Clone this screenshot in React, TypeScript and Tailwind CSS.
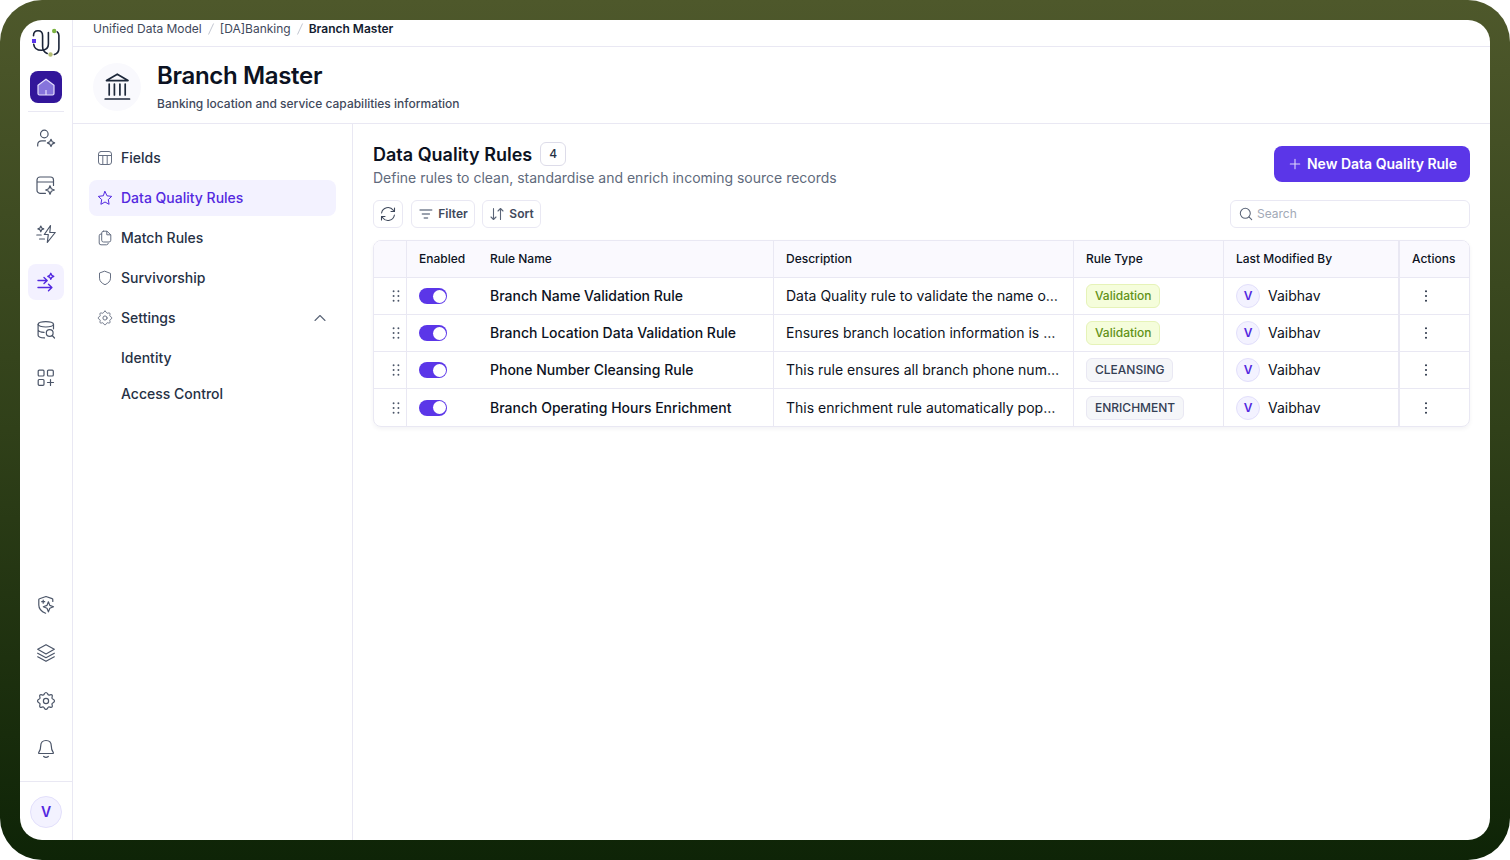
import React from "react";

type P = { children: React.ReactNode; size?: number; className?: string; sw?: number; vb?: number };
function Ico({ children, size = 20, className = "", sw = 1.2, vb = 20 }: P) {
  return (
    <svg width={size} height={size} viewBox={`0 0 ${vb} ${vb}`} fill="none" stroke="currentColor" strokeWidth={sw} strokeLinecap="round" strokeLinejoin="round" className={`shrink-0 ${className}`}>
      {children}
    </svg>
  );
}

const SETTINGS_COG =
  "M10 1.500c1.500 0 1.600 2.100 2.600 2.500s2.400-1.100 3.400 0-.4 2.400 0 3.400 2.500 1.100 2.500 2.600-2.100 1.600-2.500 2.600 1.100 2.400 0 3.400-2.400-.4-3.400 0-1.100 2.500-2.600 2.500-1.600-2.100-2.600-2.500-2.400 1.100-3.400 0 .4-2.400 0-3.400S1.500 11.500 1.500 10s2.100-1.600 2.500-2.600-1.100-2.400 0-3.400 2.400.4 3.400 0S8.500 1.500 10 1.500z";

function Gear({ size, sw }: { size: number; sw: number }) {
  return (
    <Ico size={size} sw={sw}>
      <path d={SETTINGS_COG} />
      <circle cx="10" cy="10" r="2.600" />
    </Ico>
  );
}

function Logo() {
  return (
    <svg width="36" height="36" viewBox="0 0 36 36" fill="none" stroke="#1b2438" strokeWidth="1.600" strokeLinecap="round" className="shrink-0">
      <path d="M5.500 11.800C5.500 8.500 7.200 6.800 10 6.800s4.600 1.900 4.600 5v10.700c0 3.700 1.400 5.700 4.600 7" />
      <path d="M5.700 20.300c.5 3.600 3.500 5.900 7.800 5.900 4.600 0 6.900-2.200 6.900-6.200V8.500" />
      <path d="M29.200 7.800c1.200.8 1.700 1.900 1.700 3.700v12.800c0 3.300-1.600 5.500-4.500 6.200" />
      <rect x="4" y="15" width="4" height="4" fill="#5b36ea" stroke="none" />
      <circle cx="26.200" cy="7" r="2.200" fill="#7cb342" stroke="none" />
      <circle cx="22.500" cy="30.500" r="2.200" fill="#b3bd74" stroke="none" />
    </svg>
  );
}

function Slash() {
  return (
    <svg width="18" height="16" viewBox="0 0 18 16" stroke="#c3c7d1" strokeWidth="1" className="shrink-0">
      <path d="M11.600 2.500 6.500 13.500" />
    </svg>
  );
}

const railTop = [
  <g key="u" transform="translate(0 .5)"><circle cx="8.300" cy="5.500" r="3.800" /><path d="M1.700 17.500v-1.300c0-2.400 1.800-3.900 4.200-3.900h3.600" /><path d="m15 10.800 1.200 2.400 2.400 1.200-2.400 1.200-1.200 2.400-1.200-2.400-2.400-1.200 2.400-1.200z" /></g>,
  <g key="w"><path d="M9.500 17.300H4a3 3 0 0 1-3-3V4a3 3 0 0 1 3-3h10.500a3 3 0 0 1 3 3v5.500M1 6h16.500" /><path d="m14 9.700 1.300 3 3 1.300-3 1.300-1.300 3-1.300-3-3-1.300 3-1.300z" /></g>,
  <g key="z"><path d="M14.500 1.500 8.300 10.500h4l-1 8L19.200 8.500h-5.400zM4.800 2l.9 2 2 .9-2 .9-.9 2-.9-2-2-.9 2-.9zM.8 11h4.400M3.500 15h5" /></g>,
  <g key="r"><path d="M2 8.500h8.500M8 5.500l3.200 3-3.200 3M2 15.500h13.500M12.500 12.200l3.400 3.300-3.400 3.300M14.800 1.300l1 2 2 1-2 1-1 2-1-2-2-1 2-1z" /></g>,
  <g key="d"><ellipse cx="9.800" cy="4.300" rx="7.700" ry="2.700" /><path d="M2.100 4.300v10.900c0 1.500 2.900 2.600 6.400 2.700M17.500 4.300v4.500M2.100 9.800c.3 1.300 2.600 2.300 6 2.500" /><circle cx="13.700" cy="13" r="3.400" /><path d="m16.200 15.500 2.300 2.500" /></g>,
  <g key="g"><rect x="2.200" y="2.200" width="5.800" height="5.800" rx="1" /><rect x="11.500" y="2.200" width="5.800" height="5.800" rx="1" /><rect x="2.200" y="11.500" width="5.800" height="5.800" rx="1" /><path d="M14.500 11.500v6M11.500 14.500h6" /></g>,
];

const railBottom = [
  <g key="s"><path d="M16.800 6.500V4.600a1 1 0 0 0-.7-1L10 1.500 3.500 3.700a1 1 0 0 0-.7.9V10c0 4 3 6.700 6.800 8.200" /><path d="m12.400 6.800 1.400 3.600 3.700 1.400-3.700 1.400-1.400 3.700-1.400-3.700-3.700-1.400 3.700-1.400zM7.200 5.200v3M5.700 6.700h3" /></g>,
  <g key="l"><path d="m10 1.700 8.300 4.600-8.300 4.600-8.300-4.600zM1.700 10.200l8.300 4.500 8.300-4.500M1.700 13.800l8.300 4.500 8.300-4.500" /></g>,
];

const side = [
  { label: "Fields", icon: <g><rect x="1.500" y="1.500" width="13" height="13" rx="2.500" /><path d="M1.500 5.500h13M5.800 5.500v9M10.200 5.500v9" /></g> },
  { label: "Data Quality Rules", active: true, icon: <path d="m8 1.500 2 4.300 4.700.6-3.400 3.200.8 4.700L8 12l-4.100 2.300.8-4.700-3.400-3.200L6 5.800z" /> },
  { label: "Match Rules", icon: <g><path d="M6.500 1.200H10l3.800 3.600v5.400a1.800 1.800 0 0 1-1.800 1.800H6.500a1.800 1.800 0 0 1-1.800-1.800V3a1.800 1.800 0 0 1 1.800-1.800z" /><path d="M9.800 1.400v3.400h3.800M4.700 4H4a1.800 1.800 0 0 0-1.800 1.800v7.200A1.800 1.800 0 0 0 4 14.800h5.500a1.800 1.800 0 0 0 1.800-1.500" /></g> },
  { label: "Survivorship", icon: <path d="m8 1.300 5.500 2.100v4.800c0 3-2.300 5.100-5.500 6.500-3.200-1.400-5.500-3.500-5.500-6.500V3.400z" /> },
];

const rows = [
  ["Branch Name Validation Rule", "Data Quality rule to validate the name of the branch", "Validation"],
  ["Branch Location Data Validation Rule", "Ensures branch location information is complete", "Validation"],
  ["Phone Number Cleansing Rule", "This rule ensures all branch phone numbers are clean", "CLEANSING"],
  ["Branch Operating Hours Enrichment", "This enrichment rule automatically populates hours", "ENRICHMENT"],
];

const COLS = "grid grid-cols-[33px_71px_296px_300px_150px_176px_1fr]";

export default function App() {
  return (
    <div className="h-[860px] w-[1510px] bg-white font-['Inter',sans-serif] text-[#0c1222]">
      <div className="h-full rounded-[42px] bg-linear-to-b from-[#4e582b] via-[#304019] to-[#0e2407] p-5">
        <div className="flex h-full overflow-hidden rounded-[22px] bg-white">
          <aside className="flex w-[53px] shrink-0 flex-col items-center border-r border-[#e9e8f3] text-[#4b5568]">
            <div className="mt-1"><Logo /></div>
            <div className="mt-[11px] flex size-8 items-center justify-center rounded-lg bg-[#32169a]">
              <svg width="20" height="20" viewBox="0 0 20 20" fill="#8674dc" stroke="#e4defc" strokeWidth="1.200" strokeLinejoin="round"><path d="M2 8.300 10 2.200l8 6.100v8.200a1.500 1.500 0 0 1-1.500 1.500h-13A1.500 1.500 0 0 1 2 16.500z" /><path d="M10 18v-5" /></svg>
            </div>
            <div className="mt-2 h-px w-9 bg-[#e9e8f3]" />
            <div className="mt-2 flex flex-col gap-3">
              {railTop.map((icon, i) => (
                <div key={i} className={i === 3 ? "flex size-9 items-center justify-center rounded-lg bg-[#f3f1ff] text-[#5329e0]" : "flex size-9 items-center justify-center"}>
                  <Ico sw={i === 3 ? 1.4 : 1.2}>{icon}</Ico>
                </div>
              ))}
            </div>
            <div className="mt-auto flex flex-col gap-3">
              {railBottom.map((icon, i) => (
                <div key={i} className="flex size-9 items-center justify-center"><Ico>{icon}</Ico></div>
              ))}
              <div className="flex size-9 items-center justify-center"><Gear size={20} sw={1.2} /></div>
              <div className="flex size-9 items-center justify-center">
                <Ico><path d="M10 1.500c-3.300 0-5.300 2.300-5.300 5.400 0 3-.6 4.700-1.900 6.500-.4.600-.1 1.100.5 1.100h13.400c.6 0 .9-.5.500-1.100-1.300-1.800-1.900-3.500-1.900-6.500 0-3.100-2-5.400-5.300-5.400zM7.700 17.500c1.300 1.100 3.300 1.100 4.600 0" /></Ico>
              </div>
            </div>
            <div className="mt-3.5 flex h-[59px] w-full items-center justify-center border-t border-[#e9e8f3] pt-0.5">
              <div className="flex size-8 items-center justify-center rounded-full border border-[#e2dffb] bg-[#f3f2ff] text-sm font-semibold text-[#5329e0]">V</div>
            </div>
          </aside>

          <div className="flex min-w-0 flex-1 flex-col">
            <nav className="flex h-[27px] shrink-0 items-start border-b border-[#e9e8f3] pl-5 pt-px text-xs leading-4 text-[#3f495c]">
              <span>Unified Data Model</span>
              <Slash />
              <span>[DA]Banking</span>
              <Slash />
              <span className="font-semibold text-[#131c30]">Branch Master</span>
            </nav>
            <header className="flex h-[77px] shrink-0 items-start border-b border-[#e9e8f3] pl-5 pt-4">
              <div className="flex size-12 items-center justify-center rounded-full bg-[#f9f9fd] text-[#1e293b]">
                <Ico size={32} vb={32} sw={1.700}>
                  <path d="m5.500 9.600 10.800-6.400 10.700 6.400zM8.200 13v11M13.400 13v11M18.900 13v11M24.200 13v11M4.200 28h24.300" />
                </Ico>
              </div>
              <div className="ml-4 -mt-[3px]">
                <h1 className="text-2xl leading-8 font-semibold tracking-[-0.33px]">Branch Master</h1>
                <p className="mt-0.5 text-xs leading-5 font-medium text-[#3f495c]">Banking location and service capabilities information</p>
              </div>
            </header>

            <div className="flex min-h-0 flex-1">
              <div className="flex w-[280px] shrink-0 flex-col gap-1 border-r border-[#e9e8f3] p-4 text-sm font-medium text-[#263145]">
                {side.map((s) => (
                  <div key={s.label} className={s.active ? "flex h-9 items-center gap-2 rounded-lg bg-[#f3f2ff] px-2 text-[#5329e0]" : "flex h-9 items-center gap-2 px-2"}>
                    <Ico size={16} vb={16} sw={1} className={s.active ? "" : "text-[#677083]"}>{s.icon}</Ico>
                    {s.label}
                  </div>
                ))}
                <div className="flex h-9 items-center gap-2 px-2">
                  <span className="text-[#677083]"><Gear size={16} sw={1.200} /></span>
                  Settings
                  <Ico size={16} vb={16} sw={1.100} className="ml-auto text-[#5b6578]"><path d="m3 10.500 5-5 5 5" /></Ico>
                </div>
                <div className="flex flex-col pl-8">
                  <div className="flex h-9 items-center">Identity</div>
                  <div className="flex h-9 items-center">Access Control</div>
                </div>
              </div>

              <main className="min-w-0 flex-1 px-5 pt-4">
                <div className="flex items-center justify-between">
                  <div>
                    <div className="flex h-7 items-center gap-2">
                      <h2 className="pt-px text-lg font-semibold">Data Quality Rules</h2>
                      <span className="flex h-6 w-[26px] items-center justify-center rounded-md border border-[#dddce9] text-xs font-medium text-[#263145]">4</span>
                    </div>
                    <p className="text-sm leading-5 text-[#606a7c]">Define rules to clean, standardise and enrich incoming source records</p>
                  </div>
                  <button className="flex h-9 w-[196px] items-center justify-center gap-1 rounded-lg bg-[#5b36e8] text-sm font-semibold text-white">
                    <Ico size={16} vb={16} sw={1.100} className="opacity-80"><path d="M8 3.300v9.400M3.300 8h9.400" /></Ico>
                    New Data Quality Rule
                  </button>
                </div>

                <div className="mt-3 flex h-7 gap-2 text-xs font-semibold text-[#3f495c]">
                  <button className="flex w-[30px] items-center justify-center rounded-md border border-[#e9e8f3]">
                    <Ico size={16} vb={16} sw={1.100}><path d="M1.600 7A6.500 6.500 0 0 1 13.300 4.300L14.500 5.500M14.500 2v3.500H11M14.400 9A6.500 6.500 0 0 1 2.700 11.700L1.500 10.500M1.500 14v-3.500H5" /></Ico>
                  </button>
                  <button className="flex w-16 items-center justify-center gap-1 rounded-md border border-[#e9e8f3]">
                    <Ico size={16} vb={16} sw={1.300} className="text-[#7a8293]"><path d="M2 4h11.800M4.300 8h7.200M6.200 12h3.400" /></Ico>Filter
                  </button>
                  <button className="-ml-px flex w-[59px] items-center justify-center gap-1 rounded-md border border-[#e9e8f3]">
                    <Ico size={16} vb={16} sw={1.100} className="text-[#5b6578]"><path d="M4.500 2.500v11M2 11l2.500 2.500L7 11M11.500 13.500v-11M9 5l2.500-2.500L14 5" /></Ico>Sort
                  </button>
                  <div className="ml-auto flex w-60 items-center gap-1 rounded-md border border-[#e9e8f3] pl-2 font-normal text-[#a2a9b6]">
                    <Ico size={14} vb={16} sw={1.200} className="text-[#5b6578]"><circle cx="7.200" cy="7.200" r="5.700" /><path d="m11.400 11.400 3.100 3.100" /></Ico>Search
                  </div>
                </div>

                <div className="mt-3 overflow-hidden rounded-lg border border-[#e9e8f3] shadow-[0_2px_4px_rgba(20,20,60,0.05)]">
                  <div className={`${COLS} h-[37px] border-b border-[#e9e8f3] bg-[#faf9fe] text-xs leading-9 font-medium`}>
                    <div className="border-r border-[#e9e8f3]" />
                    <div className="pl-3">Enabled</div>
                    <div className="border-r border-[#e9e8f3] pl-3">Rule Name</div>
                    <div className="border-r border-[#e9e8f3] pl-3">Description</div>
                    <div className="border-r border-[#e9e8f3] pl-3">Rule Type</div>
                    <div className="border-r-2 border-[#e9e8f3] pl-3">Last Modified By</div>
                    <div className="pl-3">Actions</div>
                  </div>
                  {rows.map(([name, desc, type], i) => (
                    <div key={name} className={`${COLS} text-sm ${i < 3 ? "h-[37px] border-b border-[#e9e8f3]" : "h-[37px]"}`}>
                      <div className="flex items-center justify-end border-r border-[#e9e8f3] pr-0.5">
                        <svg width="16" height="16" viewBox="0 0 16 16" fill="#4b5568">
                          {[3.3, 8, 12.7].map((y) => (<g key={y}><circle cx="5.600" cy={y} r=".95" /><circle cx="10.400" cy={y} r=".95" /></g>))}
                        </svg>
                      </div>
                      <div className="flex items-center pl-3">
                        <div className="flex h-4 w-7 items-center justify-end rounded-full bg-[#5b36e8] pr-px"><span className="size-[13px] rounded-full bg-white" /></div>
                      </div>
                      <div className="flex items-center border-r border-[#e9e8f3] pl-3 font-medium">{name}</div>
                      <div className="flex min-w-0 items-center border-r border-[#e9e8f3] px-3"><span className="truncate">{desc}</span></div>
                      <div className="flex items-center border-r border-[#e9e8f3] pl-3">
                        <span className={type === "Validation" ? "flex h-6 items-center rounded-md border border-[#e6f3b8] bg-[#f5fddb] pr-[7px] pl-2 text-xs font-medium text-[#629216]" : "flex h-6 items-center rounded-md border border-[#e9e8f3] bg-[#f5f6f9] px-2 text-xs font-medium text-[#344054]"}>{type}</span>
                      </div>
                      <div className="flex items-center gap-2 border-r-2 border-[#e9e8f3] pl-3">
                        <span className="flex size-6 items-center justify-center rounded-full border border-[#e2dffb] bg-[#f3f2ff] text-xs font-semibold text-[#5329e0]">V</span>
                        Vaibhav
                      </div>
                      <div className="flex items-center pl-[18px]">
                        <svg width="16" height="16" viewBox="0 0 16 16" fill="#263145"><circle cx="8" cy="3.300" r="1" /><circle cx="8" cy="8" r="1" /><circle cx="8" cy="12.700" r="1" /></svg>
                      </div>
                    </div>
                  ))}
                </div>
              </main>
            </div>
          </div>
        </div>
      </div>
    </div>
  );
}
